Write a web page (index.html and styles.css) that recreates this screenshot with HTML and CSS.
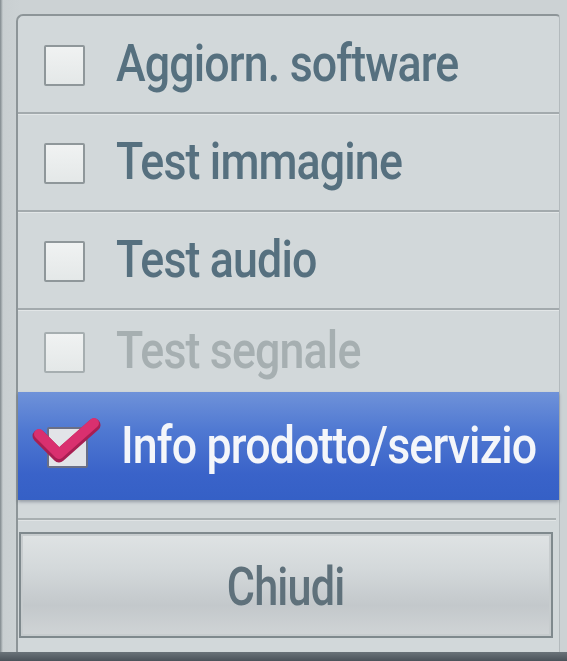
FILE: index.html
```html
<!DOCTYPE html>
<html lang="it">
<head>
    <meta charset="UTF-8">
    <meta name="viewport" content="width=device-width, initial-scale=1.0">
    <title>Supporto clienti</title>
    <link rel="stylesheet" href="styles.css">
</head>
<body>
    <div class="screen">
        <div class="panel">
            <ul class="menu">
                <li class="item">
                    <span class="box"></span>
                    <span class="label">Aggiorn. software</span>
                </li>
                <li class="item">
                    <span class="box"></span>
                    <span class="label">Test immagine</span>
                </li>
                <li class="item">
                    <span class="box"></span>
                    <span class="label">Test audio</span>
                </li>
                <li class="item item-short disabled">
                    <span class="box"></span>
                    <span class="label">Test segnale</span>
                </li>
                <li class="item selected">
                    <span class="box">
                        <svg class="tick" width="76" height="56" viewBox="0 0 76 56">
                            <path d="M8 21 L28 41 L63 10" fill="none" stroke="#a81e52" stroke-width="13" stroke-linecap="round" stroke-linejoin="round"/>
                            <path d="M8 19 L28 39 L63 8" fill="none" stroke="#d9306f" stroke-width="10" stroke-linecap="round" stroke-linejoin="round"/>
                        </svg>
                    </span>
                    <span class="label">Info prodotto/servizio</span>
                </li>
            </ul>
            <div class="footer">
                <div class="rule"></div>
                <button class="close"><span class="close-text">Chiudi</span></button>
            </div>
        </div>
        <div class="bezel"></div>
    </div>
</body>
</html>
```

FILE: styles.css
```css
body {
    margin: 0;
    background-color: #ccd2d4;
    font-family: Roboto, "Liberation Sans", sans-serif;
}

.screen {
    height: 661px;
    padding: 14px 7px 0 16px;
    box-sizing: border-box;
    display: flex;
    flex-direction: column;
    background: linear-gradient(to right, #7f888c 0, #c9cfd1 3px, #ccd2d4 20px);
}

.panel {
    flex: 1;
    background-color: #d2d8da;
    border-top: 2px solid #8d9598;
    border-left: 2px solid #8d9598;
    border-right: 1px solid #b3babd;
    border-radius: 7px 4px 0 0;
}

.menu {
    list-style: none;
    margin: 0;
    padding: 0;
}

.item {
    height: 96px;
    display: flex;
    align-items: center;
    border-bottom: 2px solid #a3aaad;
    box-shadow: 0 1px 0 #e2e6e7;
    color: #56707f;
}

.item-short {
    height: 82px;
    border-bottom: none;
    box-shadow: none;
}

.box {
    position: relative;
    flex: none;
    width: 37px;
    height: 37px;
    margin: 2px 0 0 26px;
    background: linear-gradient(#f0f2f2, #e4e8e8);
    border: 2px solid #8f979a;
    border-radius: 2px;
}

.label {
    display: inline-block;
    margin-left: 31px;
    font-size: 52px;
    font-weight: 500;
    line-height: 1;
    letter-spacing: -1px;
    white-space: nowrap;
    transform: scaleX(0.86);
    transform-origin: left center;
}

.disabled {
    color: #a6afb1;
}

.disabled .box {
    border-color: #a6aeb0;
}

.selected {
    height: 108px;
    border-bottom: none;
    color: #f4f6fa;
    background: linear-gradient(#6f92d9 0%, #5079d2 35%, #3a63c9 75%, #3560c6 100%);
    box-shadow: 0 2px 3px rgba(40, 50, 70, 0.35);
}

.selected .box {
    margin-left: 29px;
    background: #e2e4e8;
    border-color: #6a6f86;
}

.selected .label {
    margin-left: 33px;
}

.tick {
    position: absolute;
    left: -18px;
    top: -14px;
}

.footer {
    padding-top: 18px;
}

.rule {
    height: 2px;
    margin: 0 3px 0 0;
    background-color: #a8afb1;
    box-shadow: 0 1px 0 #e0e4e5;
}

.close {
    display: flex;
    align-items: center;
    justify-content: center;
    width: 534px;
    height: 106px;
    margin: 12px 0 0 1px;
    padding: 0;
    font-family: Roboto, "Liberation Sans", sans-serif;
    color: #5f717b;
    background: linear-gradient(#dfe3e4 0%, #d3d8da 35%, #c3c8cb 70%, #d0d4d6 100%);
    border: 2px solid #7f898d;
    box-shadow: inset 0 0 0 2px #c7ccce;
}

.close-text {
    display: inline-block;
    margin: 4px 0 0 0;
    font-size: 54px;
    font-weight: 500;
    line-height: 1;
    letter-spacing: -1px;
    transform: scaleX(0.8);
}

.bezel {
    height: 9px;
    margin-left: -16px;
    margin-right: -7px;
    background: linear-gradient(#6a7379, #4b535a);
}
```
